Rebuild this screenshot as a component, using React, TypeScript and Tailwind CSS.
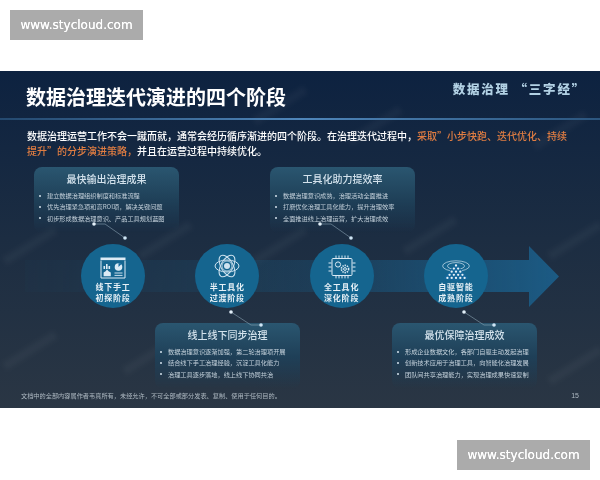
const cjk = "font-['Noto_Sans_CJK_SC',sans-serif]";

type CardData = { title: string; items: string[] };

const topCards: CardData[] = [
  {
    title: "最快输出治理成果",
    items: ["建立数据治理组织制度和标准流程", "优先治理紧急项和高ROI项，解决关键问题", "初步形成数据治理意识、产品工具规划蓝图"],
  },
  {
    title: "工具化助力提效率",
    items: ["数据治理意识成熟，治理活动全面推进", "打磨优化治理工具化能力，提升治理效率", "全面推进线上治理运营，扩大治理成效"],
  },
];

const bottomCards: CardData[] = [
  {
    title: "线上线下同步治理",
    items: ["数据治理意识逐渐加强，第二轮治理项开展", "结合线下手工治理经验，沉淀工具化能力", "治理工具逐步落地，线上线下协同共治"],
  },
  {
    title: "最优保障治理成效",
    items: ["形成企业数据文化，各部门自驱主动发起治理", "创新技术应用于治理工具，向智能化治理发展", "团队间共享治理能力，实现治理成果快速复制"],
  },
];

// faint diagonal marks printed across the slide
const marks = [
  { left: 0, top: 170 },
  { left: 135, top: 165 },
  { left: 250, top: 170 },
  { left: 400, top: 160 },
  { left: 545, top: 165 },
  { left: 0, top: 275 },
  { left: 120, top: 280 },
  { left: 250, top: 30 },
  { left: 345, top: 50 },
  { left: 530, top: 55 },
  { left: 545, top: 290 },
];

function Card({ card }: { card: CardData }) {
  return (
    <div className="h-[66px] w-[145px] rounded-lg bg-gradient-to-b from-[#2a5670] via-[#1f4058] to-transparent pt-[4px]">
      <h3 className="text-center text-[10px] leading-[16px] font-medium text-[#d3e2ec]">{card.title}</h3>
      <ul className="mt-[3px] flex flex-col">
        {card.items.map((item) => (
          <li key={item} className="flex h-[11.4px] items-center pl-[5px] text-[6.2px] whitespace-nowrap text-[#c3d0da]">
            <span className="mr-[6px] h-[2px] w-[2px] shrink-0 rounded-full bg-[#d5e2ec]" />
            {item}
          </li>
        ))}
      </ul>
    </div>
  );
}

function DashboardIcon() {
  return (
    <svg viewBox="0 0 26 22" className="h-[22px] w-[26px]" fill="none">
      <path d="M1 3.5V21H25V3.5" stroke="#dcebf5" strokeWidth="1" />
      <rect x="0.5" y="0.5" width="25" height="2.6" fill="#dcebf5" />
      <path d="M3.5 9h1.6v3H3.5zM6 7h1.6v5H6zM8.5 9h1.6v3H8.5z" fill="#dcebf5" />
      <path d="M7 12.6l1.6 1.6 2.2 1.2v3.8H3.6v-3.8l2-1.2z" fill="#dcebf5" />
      <circle cx="18.5" cy="10" r="3.8" fill="#dcebf5" />
      <path d="M18.5 10V6.2h3.8z" fill="#15689c" />
      <path d="M14.5 16h8M14.5 18.4h8" stroke="#dcebf5" strokeWidth="0.9" />
    </svg>
  );
}

function AtomIcon() {
  return (
    <svg viewBox="0 0 26 26" className="h-[26px] w-[26px]" fill="none" stroke="#cfe3f0" strokeWidth="1">
      <ellipse cx="13" cy="13" rx="12" ry="6" />
      <ellipse cx="13" cy="13" rx="12" ry="6" transform="rotate(60 13 13)" />
      <ellipse cx="13" cy="13" rx="12" ry="6" transform="rotate(120 13 13)" />
      <circle cx="13" cy="13" r="3" fill="#cfe3f0" stroke="none" />
      <circle cx="13" cy="13" r="5" strokeWidth="0.8" />
    </svg>
  );
}

function ChipIcon() {
  return (
    <svg viewBox="0 0 28 24" className="h-[24px] w-[28px]" fill="none" stroke="#dcebf5" strokeWidth="1">
      <rect x="4" y="3.5" width="20" height="17" rx="1" />
      <path d="M8 0.5v2.4M11 0.5v2.4M14 0.5v2.4M17 0.5v2.4M20 0.5v2.4M8 21v2.4M11 21v2.4M14 21v2.4M17 21v2.4M20 21v2.4M0.5 8h3M0.5 12h3M0.5 16h3M24.5 8h3M24.5 12h3M24.5 16h3" />
      <circle cx="10" cy="9.5" r="2.6" />
      <circle cx="17" cy="14" r="3.6" strokeWidth="1.6" strokeDasharray="1.4 0.9" />
      <circle cx="17" cy="14" r="1.4" />
    </svg>
  );
}

function PyramidIcon() {
  const rows = [1, 2, 3, 4, 5];
  return (
    <svg viewBox="0 0 28 21" className="h-[21px] w-[28px]" fill="none">
      <ellipse cx="14" cy="6" rx="13.4" ry="5.2" stroke="#cfe2ef" strokeWidth="0.7" />
      <ellipse cx="14" cy="6" rx="8.5" ry="3.4" stroke="#cfe2ef" strokeWidth="0.7" />
      <path d="M14 3L1.5 18.5Q14 22.5 26.5 18.5z" fill="#15689c" />
      {rows.map((count, r) =>
        Array.from({ length: count }).map((_, i) => (
          <circle key={`${r}-${i}`} cx={14 + (i - (count - 1) / 2) * 4.3} cy={5.5 + r * 3.1} r="1.15" fill="#e6f1f8" />
        )),
      )}
    </svg>
  );
}

const stages = [
  { lines: ["线下手工", "初探阶段"], icon: <DashboardIcon />, box: "pt-[12px]" },
  { lines: ["半工具化", "过渡阶段"], icon: <AtomIcon />, box: "pt-[10px]" },
  { lines: ["全工具化", "深化阶段"], icon: <ChipIcon />, box: "pt-[11px]" },
  { lines: ["自驱智能", "成熟阶段"], icon: <PyramidIcon />, box: "pt-[14px]" },
];

function Watermark() {
  return (
    <div className="flex h-[30px] w-[133px] items-center justify-center bg-[#ababab] font-['DejaVu_Sans',sans-serif] text-[12px] text-white blur-[0.3px] [text-shadow:0_0_0.6px_#fff]">
      www.stycloud.com
    </div>
  );
}

function Connectors() {
  const links = [
    [94, 57, 105, 57, 125, 71],
    [320, 57, 331, 57, 351, 71],
    [231, 145, 251, 158, 261, 158],
    [464, 145, 484, 158, 494, 158],
  ];
  return (
    <svg className="absolute top-0 left-0 h-[241px] w-[600px]" viewBox="0 0 600 241" fill="none">
      {links.map(([a, b, c, d, e, f]) => (
        <g key={a}>
          <path d={`M${a} ${b}L${c} ${d}L${e} ${f}`} stroke="#9fb8c9" strokeWidth="0.5" />
          <circle cx={a} cy={b} r="1.8" fill="#e3f0f9" />
          <circle cx={e} cy={f} r="1.8" fill="#cfe5f5" />
        </g>
      ))}
    </svg>
  );
}

function FlowArrow() {
  return (
    <svg className="absolute top-0 left-0 h-[64px] w-[600px]" viewBox="0 0 600 64" fill="none">
      <defs>
        <linearGradient id="band" x1="0" x2="1" y1="0" y2="0">
          <stop offset="0" stopColor="#1d4a68" stopOpacity="0.08" />
          <stop offset="0.55" stopColor="#1b4f72" stopOpacity="0.45" />
          <stop offset="0.8" stopColor="#1b5379" stopOpacity="0.85" />
          <stop offset="1" stopColor="#1c5b84" />
        </linearGradient>
      </defs>
      <path d="M25 16H529V2L559 32.5L529 63V48H25z" fill="url(#band)" />
    </svg>
  );
}

export default function App() {
  return (
    <div className={`flex h-[480px] w-[600px] flex-col overflow-hidden bg-white ${cjk}`}>
      <div className="h-[71px] pt-[10px] pl-[10px]">
        <Watermark />
      </div>

      <section className="relative h-[337px] overflow-hidden bg-gradient-to-b from-[#0d2240] via-[#1c2d42] to-[#2a3644]">
        {marks.map((m) => (
          <span
            key={`${m.left}-${m.top}`}
            className="absolute h-[9px] w-[60px] -rotate-[32deg] bg-white/[0.03] blur-[2px]"
            style={{ left: m.left, top: m.top }}
          />
        ))}

        <div className="relative blur-[0.3px]">
          <header className="flex h-[47px] items-start justify-between pr-[14px] pl-[26px]">
            <h1 className="mt-[11px] text-[20px] leading-[30px] font-bold text-white">数据治理迭代演进的四个阶段</h1>
            <p className="mt-[9px] text-[12.5px] leading-[18px] font-black tracking-[1.8px] text-[#b2d1e4]">数据治理 “三字经”</p>
          </header>
          <div className="h-[2px] bg-gradient-to-r from-[#24496f] via-[#4f86ba] to-[#2c567f]" />

          <p className="mt-[7.5px] pl-[27px] text-[10px] leading-[15px] font-medium whitespace-nowrap text-white">
            数据治理运营工作不会一蹴而就，通常会经历循序渐进的四个阶段。在治理迭代过程中，<span className="text-[#e07d42]">采取”小步快跑、迭代优化、持续</span>
            <br />
            <span className="text-[#e07d42]">提升”的分步演进策略，</span>并且在运营过程中持续优化。
          </p>

          <div className="relative mt-[9.5px]">
            <div className="flex h-[77px] gap-[91px] pl-[34px]">
              {topCards.map((card) => (
                <Card key={card.title} card={card} />
              ))}
            </div>

            <div className="relative flex h-[64px] gap-[50.3px] pl-[81px]">
              <FlowArrow />
              {stages.map((stage) => (
                <div
                  key={stage.lines[0]}
                  className={`relative flex h-[64px] w-[64px] flex-col items-center rounded-full bg-[#15658f] ${stage.box}`}
                >
                  <div className="flex h-[24px] items-center justify-center">{stage.icon}</div>
                  <div className="absolute top-[36.5px] w-full text-center text-[8px] leading-[11.6px] font-bold tracking-[0.8px] text-[#e6f0f6]">
                    {stage.lines[0]}
                    <br />
                    {stage.lines[1]}
                  </div>
                </div>
              ))}
            </div>

            <div className="mt-[15px] flex gap-[92px] pl-[155px]">
              {bottomCards.map((card) => (
                <Card key={card.title} card={card} />
              ))}
            </div>

            <Connectors />
          </div>
        </div>

        <footer className="absolute right-0 bottom-[6px] left-0 flex items-center justify-between px-[21px] text-[6.2px] leading-[12px] text-[#aeb9c2] blur-[0.3px]">
          <span>文档中的全部内容属作者韦真所有，未经允许，不可全部或部分发表、复制、使用于任何目的。</span>
          <span className="font-['Liberation_Sans',sans-serif] text-[7px]">15</span>
        </footer>
      </section>

      <div className="flex flex-1 justify-end pt-[32px] pr-[10px]">
        <Watermark />
      </div>
    </div>
  );
}
